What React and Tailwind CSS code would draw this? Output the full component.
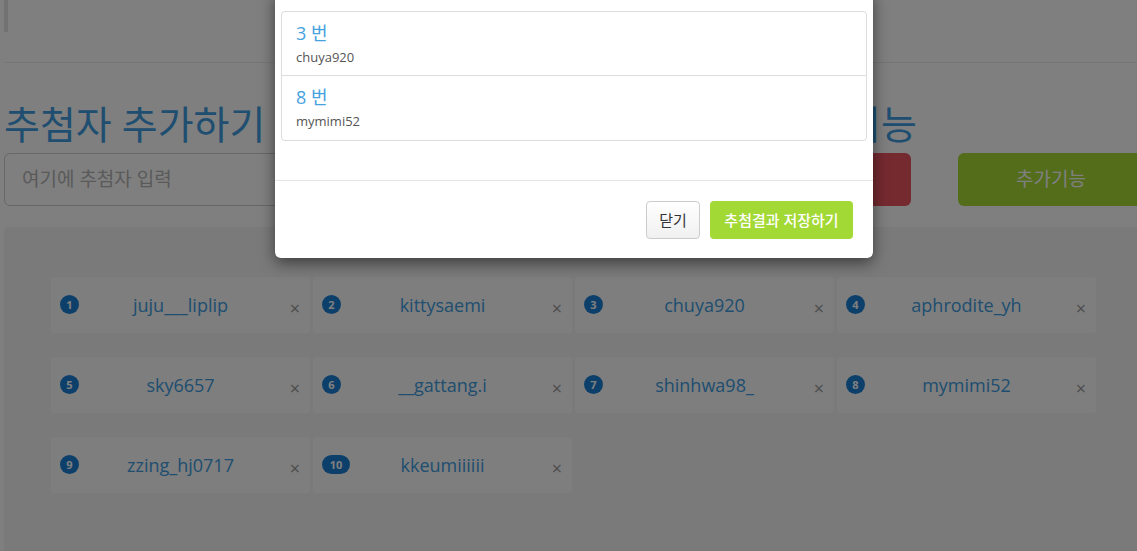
import React from "react";

const entries = [
  "juju___liplip",
  "kittysaemi",
  "chuya920",
  "aphrodite_yh",
  "sky6657",
  "__gattang.i",
  "shinhwa98_",
  "mymimi52",
  "zzing_hj0717",
  "kkeumiiiiii",
];

const winners = [
  { no: 3, name: "chuya920" },
  { no: 8, name: "mymimi52" },
];

function EntryCard({ index, name }) {
  return (
    <div className="relative h-[56px] bg-[#fcfcfc] rounded-[3px] flex items-center justify-center">
      <span
        className={`absolute left-[9px] top-[18px] h-[19px] ${
          index >= 10 ? "w-[28px]" : "w-[19px]"
        } rounded-full bg-[#1b7fd6] text-white text-[11px] font-bold flex items-center justify-center leading-none`}
      >
        {index}
      </span>
      <span className="text-[18px] text-[#3e9de0] leading-none">{name}</span>
      <span className="absolute right-[10px] top-[22px] text-[18px] leading-none text-[#9a9a9a]">
        ×
      </span>
    </div>
  );
}

export default function App() {
  return (
    <div className="relative w-full h-[551px] overflow-hidden bg-white font-['Open_Sans','Noto_Sans_CJK_KR',sans-serif]">
      {/* page */}
      <div className="w-[1144px] pl-[4px]">
        <div className="w-[4px] h-[32px] bg-[#e4e4e4]" />
        <div className="mt-[30px] border-t border-[#ececec]" />

        <div className="mt-[34px] h-[52px] flex items-center text-[#3e9de0] text-[39px] leading-none">
          <h1 className="font-normal">추첨자 추가하기</h1>
          <h1 className="font-normal ml-[508px]">추가기능</h1>
        </div>

        <div className="mt-[4px] flex items-stretch h-[53px]">
          <div className="flex-1 border border-[#cfcfcf] rounded-[6px] flex items-center pl-[17px] text-[19px] text-[#b4b4b4]">
            여기에 추첨자 입력
          </div>
          <button className="ml-[10px] w-[230px] rounded-[6px] bg-[#ea5460] text-white text-[19px]">
            추첨하기
          </button>
          <button className="ml-[47px] w-[186px] rounded-[6px] bg-[#a6da34] text-white text-[19px]">
            추가기능
          </button>
        </div>

        <div className="mt-[21px] h-[340px] bg-[#f4f4f4] rounded-[4px] pt-[50px] pl-[47px]">
          <div className="grid grid-cols-[repeat(4,259px)] gap-x-[3px] gap-y-[24px]">
            {entries.map((name, i) => (
              <EntryCard key={name} index={i + 1} name={name} />
            ))}
          </div>
        </div>
      </div>

      {/* backdrop */}
      <div className="absolute inset-0 bg-black/50" />

      {/* result dialog */}
      <div className="absolute left-[275px] top-[-10px] w-[598px] bg-white rounded-[6px] shadow-[0_5px_15px_rgba(0,0,0,0.5)]">
        <div className="pt-[21px] px-[6px] pb-[39px]">
          <div className="border border-[#dddddd] rounded-[4px]">
            {winners.map((w, i) => (
              <div
                key={w.no}
                className={`h-[64px] px-[14px] pt-[10px] ${
                  i < winners.length - 1 ? "border-b border-[#dddddd]" : ""
                }`}
              >
                <div className="text-[18px] leading-[22px] text-[#45a2e0]">
                  {w.no} 번
                </div>
                <div className="mt-[5px] text-[13px] leading-[16px] text-[#555555]">
                  {w.name}
                </div>
              </div>
            ))}
          </div>
        </div>
        <div className="border-t border-[#e5e5e5] px-[20px] pt-[20px] pb-[19px] flex justify-end gap-[10px]">
          <button className="h-[38px] w-[54px] rounded-[4px] border border-[#cccccc] bg-gradient-to-b from-white to-[#f0f0f0] text-[15px] text-[#333333]">
            닫기
          </button>
          <button className="h-[38px] w-[143px] rounded-[4px] bg-[#a3d934] text-[15px] text-white font-medium">
            추첨결과 저장하기
          </button>
        </div>
      </div>
    </div>
  );
}
